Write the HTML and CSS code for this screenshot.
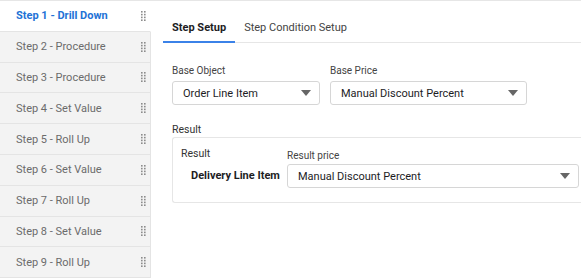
FILE: index.html
```html
<!DOCTYPE html>
<html>
<head>
<meta charset="utf-8">
<link rel="stylesheet" href="styles.css">
</head>
<body>
<div class="app">
  <aside class="steps">
    <div class="step active"><span>Step 1 - Drill Down</span><svg class="grip" viewBox="0 0 5 10"><g fill="#8c8c8c"><rect x="0" y="0" width="1.6" height="1.6"/><rect x="3" y="0" width="1.6" height="1.6"/><rect x="0" y="2.8" width="1.6" height="1.6"/><rect x="3" y="2.8" width="1.6" height="1.6"/><rect x="0" y="5.6" width="1.6" height="1.6"/><rect x="3" y="5.6" width="1.6" height="1.6"/><rect x="0" y="8.4" width="1.6" height="1.6"/><rect x="3" y="8.4" width="1.6" height="1.6"/></g></svg></div>
    <div class="step"><span>Step 2 - Procedure</span><svg class="grip" viewBox="0 0 5 10"><g fill="#8c8c8c"><rect x="0" y="0" width="1.6" height="1.6"/><rect x="3" y="0" width="1.6" height="1.6"/><rect x="0" y="2.8" width="1.6" height="1.6"/><rect x="3" y="2.8" width="1.6" height="1.6"/><rect x="0" y="5.6" width="1.6" height="1.6"/><rect x="3" y="5.6" width="1.6" height="1.6"/><rect x="0" y="8.4" width="1.6" height="1.6"/><rect x="3" y="8.4" width="1.6" height="1.6"/></g></svg></div>
    <div class="step"><span>Step 3 - Procedure</span><svg class="grip" viewBox="0 0 5 10"><g fill="#8c8c8c"><rect x="0" y="0" width="1.6" height="1.6"/><rect x="3" y="0" width="1.6" height="1.6"/><rect x="0" y="2.8" width="1.6" height="1.6"/><rect x="3" y="2.8" width="1.6" height="1.6"/><rect x="0" y="5.6" width="1.6" height="1.6"/><rect x="3" y="5.6" width="1.6" height="1.6"/><rect x="0" y="8.4" width="1.6" height="1.6"/><rect x="3" y="8.4" width="1.6" height="1.6"/></g></svg></div>
    <div class="step"><span>Step 4 - Set Value</span><svg class="grip" viewBox="0 0 5 10"><g fill="#8c8c8c"><rect x="0" y="0" width="1.6" height="1.6"/><rect x="3" y="0" width="1.6" height="1.6"/><rect x="0" y="2.8" width="1.6" height="1.6"/><rect x="3" y="2.8" width="1.6" height="1.6"/><rect x="0" y="5.6" width="1.6" height="1.6"/><rect x="3" y="5.6" width="1.6" height="1.6"/><rect x="0" y="8.4" width="1.6" height="1.6"/><rect x="3" y="8.4" width="1.6" height="1.6"/></g></svg></div>
    <div class="step"><span>Step 5 - Roll Up</span><svg class="grip" viewBox="0 0 5 10"><g fill="#8c8c8c"><rect x="0" y="0" width="1.6" height="1.6"/><rect x="3" y="0" width="1.6" height="1.6"/><rect x="0" y="2.8" width="1.6" height="1.6"/><rect x="3" y="2.8" width="1.6" height="1.6"/><rect x="0" y="5.6" width="1.6" height="1.6"/><rect x="3" y="5.6" width="1.6" height="1.6"/><rect x="0" y="8.4" width="1.6" height="1.6"/><rect x="3" y="8.4" width="1.6" height="1.6"/></g></svg></div>
    <div class="step"><span>Step 6 - Set Value</span><svg class="grip" viewBox="0 0 5 10"><g fill="#8c8c8c"><rect x="0" y="0" width="1.6" height="1.6"/><rect x="3" y="0" width="1.6" height="1.6"/><rect x="0" y="2.8" width="1.6" height="1.6"/><rect x="3" y="2.8" width="1.6" height="1.6"/><rect x="0" y="5.6" width="1.6" height="1.6"/><rect x="3" y="5.6" width="1.6" height="1.6"/><rect x="0" y="8.4" width="1.6" height="1.6"/><rect x="3" y="8.4" width="1.6" height="1.6"/></g></svg></div>
    <div class="step"><span>Step 7 - Roll Up</span><svg class="grip" viewBox="0 0 5 10"><g fill="#8c8c8c"><rect x="0" y="0" width="1.6" height="1.6"/><rect x="3" y="0" width="1.6" height="1.6"/><rect x="0" y="2.8" width="1.6" height="1.6"/><rect x="3" y="2.8" width="1.6" height="1.6"/><rect x="0" y="5.6" width="1.6" height="1.6"/><rect x="3" y="5.6" width="1.6" height="1.6"/><rect x="0" y="8.4" width="1.6" height="1.6"/><rect x="3" y="8.4" width="1.6" height="1.6"/></g></svg></div>
    <div class="step"><span>Step 8 - Set Value</span><svg class="grip" viewBox="0 0 5 10"><g fill="#8c8c8c"><rect x="0" y="0" width="1.6" height="1.6"/><rect x="3" y="0" width="1.6" height="1.6"/><rect x="0" y="2.8" width="1.6" height="1.6"/><rect x="3" y="2.8" width="1.6" height="1.6"/><rect x="0" y="5.6" width="1.6" height="1.6"/><rect x="3" y="5.6" width="1.6" height="1.6"/><rect x="0" y="8.4" width="1.6" height="1.6"/><rect x="3" y="8.4" width="1.6" height="1.6"/></g></svg></div>
    <div class="step"><span>Step 9 - Roll Up</span><svg class="grip" viewBox="0 0 5 10"><g fill="#8c8c8c"><rect x="0" y="0" width="1.6" height="1.6"/><rect x="3" y="0" width="1.6" height="1.6"/><rect x="0" y="2.8" width="1.6" height="1.6"/><rect x="3" y="2.8" width="1.6" height="1.6"/><rect x="0" y="5.6" width="1.6" height="1.6"/><rect x="3" y="5.6" width="1.6" height="1.6"/><rect x="0" y="8.4" width="1.6" height="1.6"/><rect x="3" y="8.4" width="1.6" height="1.6"/></g></svg></div>
  </aside>
  <main class="panel">
    <nav class="tabs">
      <div class="tab current">Step Setup</div>
      <div class="tab">Step Condition Setup</div>
    </nav>
    <div class="body">
      <div class="row">
        <div class="field f-object">
          <label>Base Object</label>
          <div class="select">Order Line Item<b class="caret"></b></div>
        </div>
        <div class="field f-price">
          <label>Base Price</label>
          <div class="select">Manual Discount Percent<b class="caret"></b></div>
        </div>
      </div>
      <div class="section-title">Result</div>
      <div class="card">
        <div class="card-title">Result</div>
        <div class="result-row">
          <div class="entity">Delivery Line Item</div>
          <div class="field f-result">
            <label>Result price</label>
            <div class="select">Manual Discount Percent<b class="caret"></b></div>
          </div>
        </div>
      </div>
    </div>
  </main>
</div>
</body>
</html>
```
FILE: styles.css
```css
* { box-sizing: border-box; }
html, body { margin: 0; padding: 0; background: #fff; }
body {
  font-family: Roboto, "Liberation Sans", Arial, sans-serif;
  color: #1d1d1f;
  width: 581px;
  height: 280px;
  overflow: hidden;
}
.app {
  display: flex;
  border-top: 1px solid #e6e6e6;
  height: 280px;
}
.steps {
  width: 151px;
  flex: none;
  display: flex;
  flex-direction: column;
}
.step {
  height: 30.8px;
  flex: none;
  display: flex;
  align-items: center;
  justify-content: space-between;
  padding: 0 4px 0 16px;
  background: #f3f3f3;
  border-bottom: 1px solid #e4e4e4;
  border-right: 1px solid #e4e4e4;
  font-size: 11px;
  color: #6b6b6b;
}
.step.active {
  background: #fff;
  border-right-color: transparent;
  color: #2272d6;
  font-weight: 700;
}
.grip {
  width: 5px;
  height: 10px;
  flex: none;
}
.panel {
  flex: 1;
  min-width: 0;
  padding-left: 12px;
}
.tabs {
  display: flex;
  border-bottom: 1px solid #e6e6e6;
  height: 42px;
  align-items: flex-end;
}
.tab {
  font-size: 11px;
  color: #444;
  padding: 0 9px 7px 9px;
  border-bottom: 2px solid transparent;
  margin-bottom: -1px;
}
.tab.current {
  font-weight: 700;
  color: #1d1d1f;
  border-bottom-color: #3b82e8;
}
.body {
  padding: 22px 0 0 9px;
}
.row {
  display: flex;
  gap: 10px;
}
.field label {
  display: block;
  font-size: 10px;
  line-height: 12px;
  color: #444;
  margin-bottom: 4px;
}
.select {
  height: 24px;
  border: 1px solid #d6d6d6;
  border-radius: 3px;
  display: flex;
  align-items: center;
  justify-content: space-between;
  padding: 0 8px 0 10px;
  font-size: 11px;
  color: #1d1d1f;
}
.caret {
  width: 0;
  height: 0;
  border-left: 5px solid transparent;
  border-right: 5px solid transparent;
  border-top: 6px solid #666;
}
.f-object { width: 148px; }
.f-price { width: 197px; }
.section-title {
  font-size: 10.5px;
  line-height: 13px;
  color: #333;
  margin-top: 18px;
  margin-bottom: 1px;
}
.card {
  border: 1px solid #e6e6e6;
  border-right: none;
  border-radius: 3px 0 0 3px;
  height: 66px;
  margin-right: -10px;
  padding: 9px 0 0 8px;
}
.card-title {
  font-size: 10.5px;
  line-height: 13px;
  color: #333;
}
.result-row {
  display: flex;
  align-items: flex-end;
  margin-top: -10px;
}
.result-row .field label { margin-bottom: 2px; }
.entity {
  width: 106px;
  flex: none;
  white-space: nowrap;
  font-size: 11px;
  font-weight: 700;
  padding-left: 10px;
  padding-bottom: 6px;
}
.f-result { width: 292px; }
```
